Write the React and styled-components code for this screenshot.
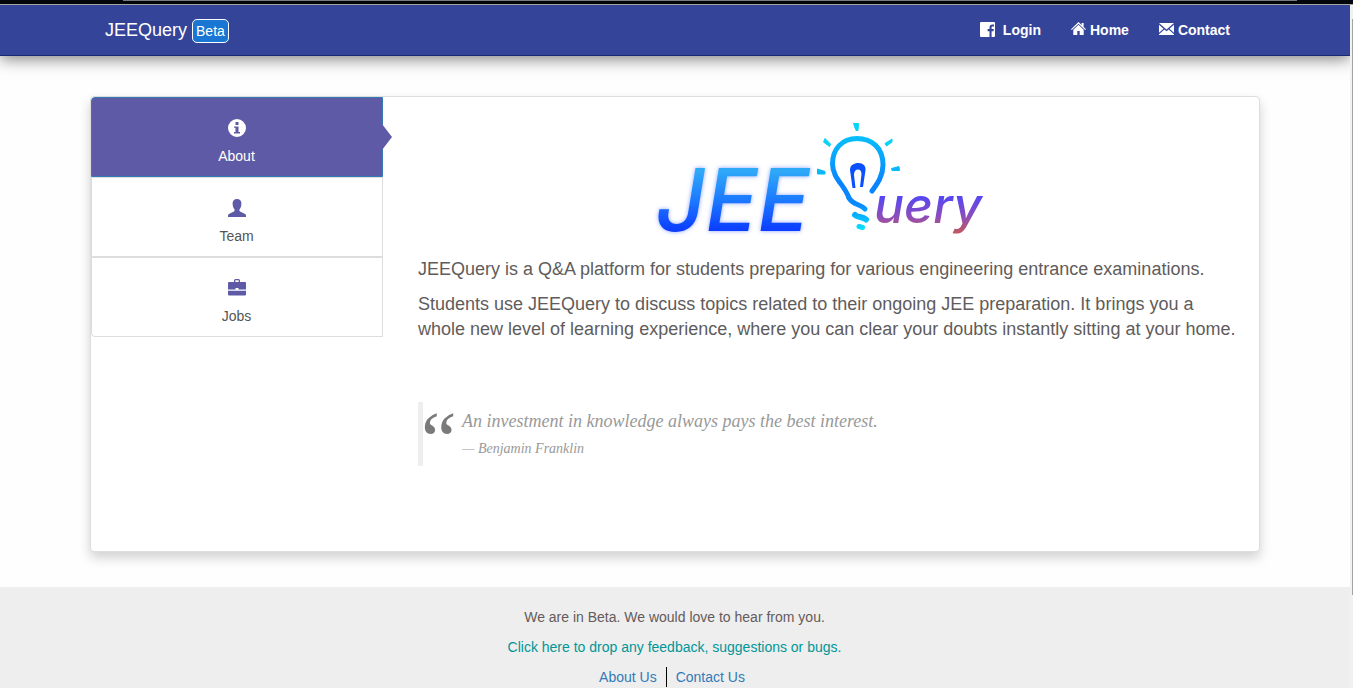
import React, { useState } from 'react';
import styled, { createGlobalStyle } from 'styled-components';

const GlobalStyle = createGlobalStyle`
  * { box-sizing: border-box; }
  body {
    margin: 0;
    background: #fefefe;
    color: #555;
    font-family: "Liberation Sans", Arial, sans-serif;
    font-size: 14px;
    line-height: 20px;
  }
  p { margin: 0; }
  a { text-decoration: none; }
`;

const Shell = styled.div`
  display: grid;
  grid-template-rows: 5px 1fr;
  grid-template-columns: minmax(0, 1fr) 3px;
  min-height: 100vh;
`;

const WindowEdge = styled.div`
  grid-column: 1 / -1;
  background: #02060b;
  border-bottom: 1px solid #a5a6a0;
  padding: 0 56px 0 123px;
`;

const EdgeLine = styled.div`
  height: 1px;
  background: #777c7b;
`;

const Page = styled.div`
  display: flex;
  flex-direction: column;
  overflow: hidden;
`;

const ScrollTrack = styled.div`
  background: #f1f1f1;
  padding: 14px 0 93px 2px;
  display: flex;
`;

const ScrollThumb = styled.div`
  flex: 1;
  background: #a3a3a3;
`;

const Container = styled.div`
  width: 100%;
  max-width: 1170px;
  margin: 0 auto;
`;

const Navbar = styled.header`
  background: #344599;
  border-bottom: 1px solid #1b2a70;
  box-shadow: 0 3px 15px rgba(0, 0, 0, 0.5);
`;

const NavRow = styled(Container)`
  display: flex;
  align-items: center;
  justify-content: space-between;
  height: 50px;
`;

const Brand = styled.a`
  display: flex;
  align-items: center;
  gap: 5px;
  padding: 0 15px;
  color: #fff;
  font-size: 18px;
`;

const BetaBadge = styled.span`
  height: 24px;
  padding: 0 3px;
  border: 1px solid #fff;
  border-radius: 5px;
  background: #1976d2;
  font-size: 14px;
  line-height: 22px;
  margin-top: 2px;
`;

const NavLinks = styled.nav`
  display: flex;
  padding-right: 15px;
`;

const NavLink = styled.a`
  display: flex;
  align-items: center;
  gap: ${(p) => (p.$wide ? 8 : 4)}px;
  padding: 15px;
  color: #fff;
  font-weight: bold;

  svg { margin-bottom: 2px; }
`;

const Card = styled(Container)`
  display: flex;
  align-items: flex-start;
  margin-top: 40px;
  min-height: 456px;
  background: #fff;
  border: 1px solid #ddd;
  border-radius: 4px;
  box-shadow: 0 6px 12px rgba(0, 0, 0, 0.175);
`;

const TabList = styled.div`
  flex: 0 0 25%;
  display: flex;
  flex-direction: column;
`;

const Tab = styled.button`
  position: relative;
  display: flex;
  flex-direction: column;
  align-items: center;
  gap: 9px;
  padding: 21px 1px 10px 0;
  border: 1px solid ${(p) => (p.$active ? '#337ab7' : '#ddd')};
  background: ${(p) => (p.$active ? '#5f5aa5' : '#fff')};
  color: ${(p) => (p.$active ? '#fff' : '#555')};
  font: inherit;
  cursor: pointer;

  svg { color: ${(p) => (p.$active ? '#fff' : '#5f5aa5')}; }
  &:first-child { border-top-left-radius: 4px; }
  &:last-child { border-bottom-left-radius: 4px; }

  &::after {
    content: "";
    display: ${(p) => (p.$active ? 'block' : 'none')};
    position: absolute;
    left: 100%;
    top: 50%;
    margin-top: -13px;
    border-left: 10px solid #5f5aa5;
    border-top: 13px solid transparent;
    border-bottom: 13px solid transparent;
  }
`;

const Panel = styled.main`
  flex: 1;
  min-width: 0;
  padding: 14px 15px 20px 35px;
  font-size: 18px;
  line-height: 25px;
  color: #5f5c5c;
`;

const Logo = styled.svg`
  display: block;
  margin: 0 auto 11px;
  overflow: visible;
`;

const Lead = styled.p`
  margin-bottom: 10px;
`;

const Quote = styled.blockquote`
  display: flex;
  margin: 60px 0 0;
  height: 64px;
  border-left: 5px solid #eee;
  font-family: "Liberation Serif", "Times New Roman", serif;
  font-style: italic;
  color: #999;
`;

const QuoteMark = styled.span`
  width: 39px;
  flex: none;
  font-size: 80px;
  font-style: normal;
  line-height: 76px;
  margin-left: -2px;
  margin-right: 2px;
  color: #7a7a7a;
`;

const QuoteBody = styled.div`
  display: flex;
  flex-direction: column;
  gap: 5px;
  padding-top: 7px;
`;

const Cite = styled.cite`
  font-size: 14px;
  line-height: 20px;
`;

const Footer = styled.footer`
  flex: 1;
  display: flex;
  flex-direction: column;
  align-items: center;
  gap: 10px;
  margin-top: 35px;
  padding: 20px 1px 0 0;
  background: #eee;
  color: #655b5b;
`;

const FeedbackLink = styled.a`
  color: #009698;
`;

const FooterLinks = styled.div`
  display: flex;
  padding-right: 5px;
`;

const FooterLink = styled.a`
  color: #337ab7;
  padding: 0 9px;

  & + & { border-left: 1px solid #000; }
`;

const FacebookIcon = () => (
  <svg width="15" height="15" viewBox="0 0 15 15" fill="currentColor" aria-hidden="true">
    <path d="M1 0h13a1 1 0 0 1 1 1v13a1 1 0 0 1-1 1h-2.400V9.300h1.900l.3-2.300h-2.200V5.600c0-.7.3-1 1-1H14V2.500c-.4-.1-1-.1-1.600-.1-1.800 0-2.900 1-2.900 2.900V7H7.600v2.300h1.900V15H1a1 1 0 0 1-1-1V1a1 1 0 0 1 1-1z" />
  </svg>
);

const HomeIcon = () => (
  <svg width="15" height="14" viewBox="0 0 15 14" fill="currentColor" aria-hidden="true">
    <path d="M7.500 0 0 7.200l.8.8 6.700-6.300L14.200 8l.8-.8-2.400-2.300V1h-2v2z" />
    <path d="M7.500 2.800 2.300 7.700V13h4V9h2.400v4h4V7.700z" />
  </svg>
);

const MailIcon = () => (
  <svg width="15" height="14" viewBox="0 0 14 14" preserveAspectRatio="none" fill="currentColor" aria-hidden="true">
    <path d="M0 1h14L7 7.500zM0 2.800 4.200 6.700 0 10.700zM14 2.800 9.800 6.700l4.200 4zM5 7.400l2 1.800 2-1.800 5 4.800v.8H0v-.8z" />
  </svg>
);

const InfoIcon = () => (
  <svg width="18" height="18" viewBox="0 0 18 18" fill="currentColor" fillRule="evenodd" aria-hidden="true">
    <path d="M9 0a9 9 0 1 1 0 18A9 9 0 0 1 9 0zM7.500 3v3h3V3zM6 7.500v1.300h1.500v4.200H6v1.400h6V13h-1.500V7.500z" />
  </svg>
);

const UserIcon = () => (
  <svg width="18" height="18" viewBox="0 0 18 18" fill="currentColor" aria-hidden="true">
    <path d="M9 0c2.800 0 4.400 1.700 4.400 4.500 0 3-1 4.800-2 6 0 1.400.2 1.800 1.200 2.200l4 2c1 .5 1.400 1 1.400 2V18H0v-1.300c0-1 .4-1.500 1.400-2l4-2c1-.4 1.200-.8 1.200-2.200-1-1.200-2-3-2-6C4.600 1.700 6.200 0 9 0z" />
  </svg>
);

const CaseIcon = () => (
  <svg width="18" height="18" viewBox="0 0 18 18" fill="currentColor" aria-hidden="true">
    <path fillRule="evenodd" d="M6 3V1.500Q6 0 7.500 0h3Q12 0 12 1.500V3h5q1 0 1 1v6.500h-7.500V9h-3v1.500H0V4q0-1 1-1zm1.300 0h3.400V1.300H7.300z" />
    <path d="M0 11.700h18V15.500q0 1-1 1H1q-1 0-1-1z" />
  </svg>
);

const JeeQueryLogo = () => (
  <Logo width="360" height="135" viewBox="0 0 360 135" role="img" aria-label="JEEQuery">
    <defs>
      <linearGradient id="jee" gradientUnits="userSpaceOnUse" x1="0" y1="60" x2="0" y2="120">
        <stop offset="0" stopColor="#2fa9f8" />
        <stop offset="0.5" stopColor="#1c78ff" />
        <stop offset="1" stopColor="#0b3cff" />
      </linearGradient>
      <linearGradient id="bulb" gradientUnits="userSpaceOnUse" x1="0" y1="25" x2="0" y2="120">
        <stop offset="0" stopColor="#08c0fa" />
        <stop offset="0.5" stopColor="#0883ff" />
        <stop offset="0.72" stopColor="#0888ff" />
        <stop offset="1" stopColor="#08e8ff" />
      </linearGradient>
      <linearGradient id="uery" gradientUnits="userSpaceOnUse" x1="0" y1="82" x2="0" y2="126">
        <stop offset="0" stopColor="#4b46ff" />
        <stop offset="0.55" stopColor="#8e4db8" />
        <stop offset="1" stopColor="#d05c4a" />
      </linearGradient>
      <filter id="glow" x="-10%" y="-20%" width="120%" height="140%">
        <feDropShadow dx="0" dy="0" stdDeviation="2" floodColor="#3b62ff" floodOpacity="0.6" />
      </filter>
    </defs>
    <text x="5" y="120" fill="url(#jee)" filter="url(#glow)" fontFamily="Inter, sans-serif" fontStyle="italic" fontWeight="500" fontSize="86">JEE</text>
    <text x="223" y="112" fill="url(#uery)" fontFamily="Inter, sans-serif" fontStyle="italic" fontWeight="500" fontSize="50">uery</text>
    <g fill="none" stroke="url(#bulb)" strokeWidth="5" strokeLinecap="round" strokeLinejoin="round">
      <path d="M221 80C226 73 232 65 232 54C232 37 221 27.500 206 27.500C191 27.500 181.500 38 181.500 53C182 68 193 73 198 87" />
      <path d="M198 87C202 94 209 93 214 98" />
      <path d="M204 104C207 107 211 105 215 108.500" strokeWidth="6" />
      <path d="M208 115.500L211.500 116.500" />
    </g>
    <path d="M201.500 77L199 59C199 54 203 52 207.500 52C212 52 215 55 214.500 59L212 76H209L210.500 63C210.500 57 203 57 203 64L204.500 77Z" fill="#0b50ff" />
    <g fill="#07d3f5" stroke="#07d3f5" strokeWidth="1" strokeLinejoin="round">
      <path d="M202.500 12.500L207.500 12.500L207 19.500L205 19.500Z" />
      <path d="M174 27.500L179.500 33L178.500 35.500L172.500 31Z" />
      <path d="M241 28L234 32.500L235.500 35L241 31Z" />
      <path d="M166.500 58L174 60.500V63H166.500Z" fill="#07b9fa" stroke="#07b9fa" />
      <path d="M240.500 57.500L248 55.500L248.500 59.500L241 59.500Z" fill="#07b9fa" stroke="#07b9fa" />
    </g>
  </Logo>
);

const tabs = [
  { name: 'About', Icon: InfoIcon },
  { name: 'Team', Icon: UserIcon },
  { name: 'Jobs', Icon: CaseIcon },
];

export default function App() {
  const [active, setActive] = useState('About');

  return (
    <>
      <GlobalStyle />
      <Shell>
        <WindowEdge><EdgeLine /></WindowEdge>
        <Page>
          <Navbar>
            <NavRow>
              <Brand href="#">JEEQuery <BetaBadge>Beta</BetaBadge></Brand>
              <NavLinks>
                <NavLink href="#login" $wide><FacebookIcon />Login</NavLink>
                <NavLink href="#home"><HomeIcon />Home</NavLink>
                <NavLink href="#contact"><MailIcon />Contact</NavLink>
              </NavLinks>
            </NavRow>
          </Navbar>
          <Card>
            <TabList role="tablist">
              {tabs.map(({ name, Icon }) => (
                <Tab
                  key={name}
                  type="button"
                  role="tab"
                  aria-selected={active === name}
                  $active={active === name}
                  onClick={() => setActive(name)}
                >
                  <Icon />
                  {name}
                </Tab>
              ))}
            </TabList>
            <Panel>
              <JeeQueryLogo />
              <Lead>JEEQuery is a Q&amp;A platform for students preparing for various engineering entrance examinations.</Lead>
              <Lead>
                Students use JEEQuery to discuss topics related to their ongoing JEE preparation. It brings you a
                whole new level of learning experience, where you can clear your doubts instantly sitting at your home.
              </Lead>
              <Quote>
                <QuoteMark>“</QuoteMark>
                <QuoteBody>
                  <p>An investment in knowledge always pays the best interest.</p>
                  <Cite>— Benjamin Franklin</Cite>
                </QuoteBody>
              </Quote>
            </Panel>
          </Card>
          <Footer>
            <p>We are in Beta. We would love to hear from you.</p>
            <FeedbackLink href="#feedback">Click here to drop any feedback, suggestions or bugs.</FeedbackLink>
            <FooterLinks>
              <FooterLink href="#about">About Us</FooterLink>
              <FooterLink href="#contact-us">Contact Us</FooterLink>
            </FooterLinks>
          </Footer>
        </Page>
        <ScrollTrack><ScrollThumb /></ScrollTrack>
      </Shell>
    </>
  );
}
